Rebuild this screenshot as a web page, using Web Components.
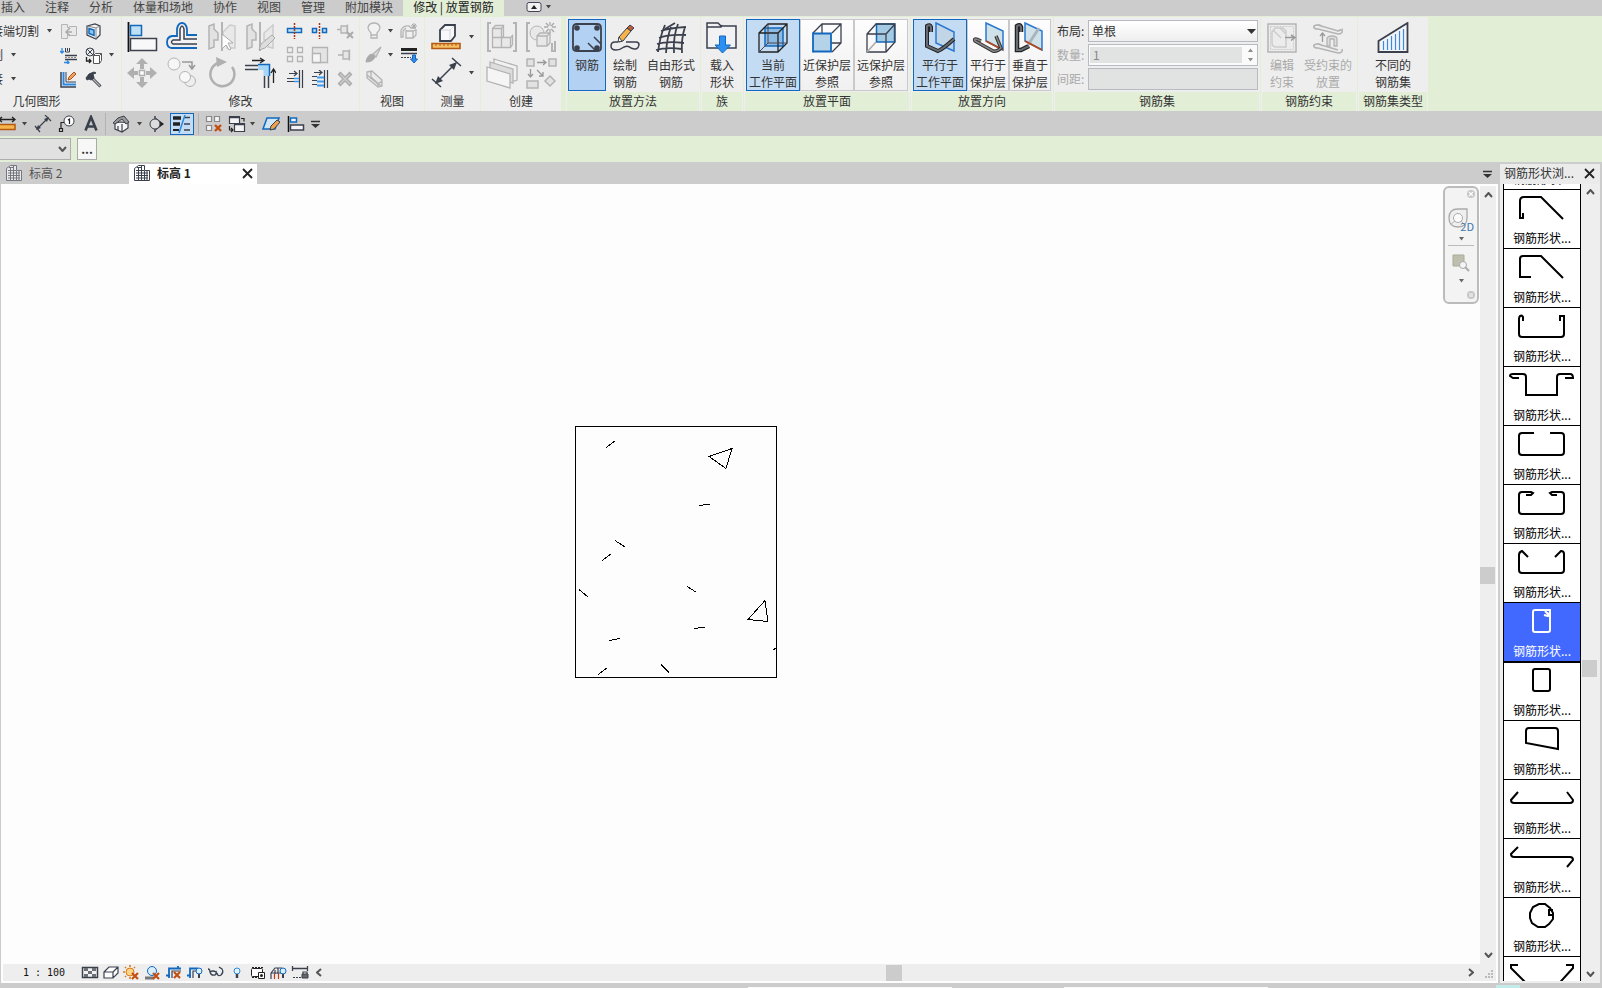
<!DOCTYPE html>
<html lang="zh-CN">
<head>
<meta charset="utf-8">
<title>修改 | 放置钢筋</title>
<style>
html,body{margin:0;height:100%}
body{font:12px/16px "Noto Sans CJK SC","Liberation Sans",sans-serif;color:#333;background:#ccc;overflow:hidden}
</style>
</head>
<body>
<cad-app></cad-app>
<script>
const D = '#3b404d', G = '#b4b4b4', B = '#1268bd', L = '#bfe0f2';
const svg = (w, h, body) => `<svg width="${w}" height="${h}" viewBox="0 0 ${w} ${h}" fill="none" aria-hidden="true">${body}</svg>`;
const p = (d, s = D, f = 'none', w = 1.5) => `<path d="${d}" stroke="${s}" fill="${f}" stroke-width="${w}"/>`;

const ICONS = {
  // geometry panel
  cope: [17, 17, p('M1.500 1.500h6v3h2v-1h7v9h-7v-1h-2v4h-6z', G, '#e9e9e9', 1) + p('M10 5l-4 4 4 4M6 9h6', '#aaa')],
  wallopen: [17, 17, p('M2 3l8-2 5 2v9l-4 4-9-4z', D, '#f4f4f6', 1.200) + p('M11 5v11M11 5l4-2M11 5L2 3', '#888', 'none', 1) + p('M4 5.500l5 1.500v5.500l-5-2z', B, '#8cc7ee')],
  beam: [17, 17, p('M2 1v5M0 4l2 2 2-2M4 15.500h5M7 13.500l2 2-2 2', '#2a8ae0', 'none', 1.300) + p('M5.500 1v4h4V1M7.500 1v3', D, 'none', 1) + p('M5 8.500h12M5 12.500h12', D, 'none', 1.300) + `<path d="M5 10.500h12" stroke="#888" stroke-dasharray="2 1"/>`],
  paintopt: [17, 17, `<circle cx="5" cy="5" r="4" stroke="${D}"/>` + p('M2 2l6 6M8 2L2 8', D, 'none', 1) + p('M1.500 10v4h4M4 12l2 2-2 2', '#222', 'none', 1.300) + p('M8.500 8.500l2-2h6v7l-2 3h-6zM8.500 8.500h6v8M14.500 8.500l2-2', '#555', '#fff', 1)],
  demolish: [17, 17, p('M1 1v15h15', D) + p('M3.500 1v12.500H16', '#2a8ae0', 'none', 2) + p('M6 1v10h10', D, 'none', 1) + p('M8 9l1-3 5-5 2 2-5 5z', '#a8541c', '#f2a45e', 1)],
  hammer: [17, 17, p('M7 7l8.500 8.500', D, 'none', 3) + p('M8 8l7 7', '#bbb', 'none', 1.200) + p('M1 7l3-4 5-2 2 1-3 1 1 4-3 2-2-1-2 1z', D, D, 1)],
  // modify panel, large
  align: [32, 32, p('M2.500 1v30', '#111', 'none', 1.800) + p('M4.500 4.500h11v10h-11z', B, L) + p('M4.500 17.500h26v12h-26z', D, '#f8f8fa')],
  offset: [32, 32, p('M31 27H5q-4-1-4-6t5-6h5V8q1-6 5-6t5 6v6h10', B, 'none', 1.800) + p('M31 23H7q-3-2 0-4h7V8q1-3 2-3t2 3v10h13', D, '#f4f4f4')],
  mirrorpick: [32, 32, p('M3 5l5-2v5l4 4v7H8v7l-5 2z', G, '#e2e2e2') + p('M29 5l-5-1-7 7v7h4v9h8z', '#ccc', '#e9e9e9') + p('M16 1v29', G, 'none', 2) + p('M16 13v15l4-4 3 5 2-1-3-6h5z', '#aaa', '#fff', 1)],
  mirrordraw: [32, 32, p('M3 5l5-2v5l4 4v7H8v7l-5 2z', G, '#e2e2e2') + p('M29 4l-9 8v7h4v7l5 1z', '#ccc', '#e9e9e9') + p('M16 1v29', G, 'none', 2) + p('M15 29l2-6 11-9 3 3-10 10z', '#aaa', '#ddd', 1)],
  move: [32, 32, p('M16 1l6 6h-4v5h-4V7h-4zM16 31l6-6h-4v-5h-4v5h-4zM1 16l7-6v4h4v4H8v4zM31 16l-7-6v4h-4v4h4v4z', 'none', '#b0b0b0') + p('M13.500 13.500h5v5h-5z', '#b0b0b0', '#fff')],
  copy: [32, 32, `<circle cx="8" cy="7" r="6" stroke="${G}" fill="#f6f6f6"/><circle cx="24" cy="24" r="5.500" stroke="${G}" fill="#eee"/><circle cx="19" cy="20" r="5.500" stroke="${G}" fill="#f8f8f8"/>` + p('M16 5h10v6M23 8l3 4 3-4', '#999')],
  rotate: [32, 32, p('M12 6A12 12 0 1 0 26 10', '#b0b0b0', 'none', 2.500) + p('M10 0l11 5-10 5z', 'none', '#b0b0b0')],
  trim: [32, 32, p('M1 8.500h13M1 12.500h13M20.500 19v12M24.500 19v12', D) + p('M14 7.500h11.500V19h-6v-6H14z', 'none', '#a5d6f5') + p('M14 7.500h11.500V19', B, 'none', 1.500) + p('M8 3.500h11M16 1l4 2.500L16 6M29.500 26V13M27 16l2.500-4 2.500 4', '#222', 'none', 1.300)],
  // modify panel, small
  split: [18, 18, p('M1.500 6.500h14v4h-14z', B, L) + `<path d="M8.500 1v16" stroke="#a63116" stroke-width="1.500" stroke-dasharray="2 1"/>`],
  splitgap: [18, 18, p('M1.500 6.500h4v4h-4zM11.500 6.500h4v4h-4z', B, L) + `<path d="M8.500 1v16" stroke="#a63116" stroke-width="1.500" stroke-dasharray="2 1"/>`],
  unpin: [18, 18, p('M1 7.500h4M5 4v7h6V4zM11.500 2.500v10', G, '#e6e6e6', 1.300) + p('M11 10l6 6M17 10l-6 6', '#aaa', 'none', 2)],
  array: [18, 18, p('M1.500 1.500h5v5h-5zM11.500 1.500h5v5h-5zM1.500 10.500h5v5h-5zM11.500 10.500h5v5h-5z', G, '#f2f2f2', 1.300)],
  scale: [18, 18, p('M1.500 1.500h15v15h-15z', G, '#e4e4e4', 1.300) + p('M1.500 7.500h8v9h-8z', G, '#f5f5f5', 1.300)],
  pin: [18, 18, p('M2 9h5M7 5v8h6V5zM13.500 3.500v11', G, '#e6e6e6', 1.300)],
  trimone: [18, 18, p('M1 8.500h7M1 11.500h7M3 3.500h8M8 1l3 2.500L8 6M13.500 0v18M16.500 0v18', D, 'none', 1.200) + p('M8 8.500h5M8 11.500h5', '#3a9af0', 'none', 1.500)],
  trimmany: [18, 18, p('M1 6.500h5M1 10.500h5M1 14.500h5M3 2.500h8M8 0l3 2.500L8 5M13.500 0v18M16.500 0v18', D, 'none', 1.200) + p('M6 7.500h7M6 11.500h7M6 15.500h7', '#3a9af0', 'none', 1.800)],
  del: [18, 18, p('M3 3l12 12M15 3L3 15', '#aaa', 'none', 4) + p('M4 4l10 10M14 4L4 14', '#ccc', 'none', 1.500)],
  // view panel
  bulb: [18, 18, p('M6 11q-3-3-3-5.500Q4 1 9 1t6 4.500Q15 8 12 11v5H6zM6 13h6', G, '#f2f2f2', 1.300)],
  hide: [18, 18, p('M1 8q3-5 8-4l2 2h5M6 8v8h7l3-3V8l-3 1H6M13 9v7M1 8v7h2V9l3-3', G, '#f0f0f0', 1.300) + p('M14 1v6M11 4h6M12 2l4 4M16 2l-4 4', '#aaa', 'none', 1)],
  brush: [18, 18, p('M16 1L8 8l3 3z', G, '#ddd', 1.300) + p('M1 16q1-7 6-8l3 3q-2 5-9 5z', '#aaa', '#aaa', 1)],
  lines: [18, 18, p('M1 3.500h16', '#222', 'none', 3) + p('M1 7.500h16', D) + `<path d="M1 11.500h10" stroke="${D}" stroke-dasharray="2 1"/>` + p('M12.500 9h3v4h2L14 17l-3.500-4h2z', B, '#3a8be8', 1)],
  section: [18, 18, p('M2 2l5-1 10 9v6l-4 1-11-9zM2 2v6M2 5l11 9v3M13 14l4-3M6 2v5l10 9', G, '#e8e8e8', 1.300)],
  // measure and create panels
  measure: [32, 32, p('M10 9l5-5h10v11l-4 5H10z', D, '#f8f8fb', 1.800) + p('M11 9h9v10M20 9l4-4', '#d5d5dc', 'none', 1) + p('M2 22.500h28v5H2z', '#b55a12', '#f6c064', 1.600) + p('M6 23v2M10 23v2M14 23v2M18 23v2M22 23v2M26 23v2', '#b55a12', 'none', 1)],
  dimension: [32, 32, p('M6 26L26 6M2 22l9 8M22 1l9 8', D, 'none', 1.500) + p('M5 27l3-8 5 5zM27 5l-3 8-5-5z', 'none', D)],
  group: [32, 32, p('M5 2H2v28h3M27 2h3v28h-3', G, 'none', 2) + p('M6.500 7.500l3-3h8v11l-2 1h-9zM6.500 16.500h9v10h-9zM15.500 16.500h9v10h-9zM24.500 16.500l2-2v9l-2 3M6.500 7.500h9v9M15.500 7.500l2-3', G, '#e8e8e8', 1.300)],
  similar: [32, 32, p('M5 2H2v28h3M27 22v8h3V20', G, 'none', 2) + `<circle cx="12" cy="12" r="7" stroke="${G}" fill="#e8e8e8"/>` + p('M12 15l3-3h10v10l-3 3H12zM12 15h10v10M22 15l3-3', G, '#e8e8e8', 1.300) + p('M25 1v11M19 6h12M21 2l8 9M29 2l-8 9', '#aaa', 'none', 1.300) + '<circle cx="25" cy="6.500" r="2" fill="#eee"/>'],
  assembly: [32, 32, p('M8 2l23 7v14l-3 1L8 17z', G, '#f2f2f2', 1.300) + p('M4 5l23 7v14L4 19z', G, '#ddd', 1.300) + p('M1 10l23 7v14L1 24z', G, '#f5f5f5', 1.300)],
  parts: [32, 32, p('M2 2h7v7H2zM24 2h7v7h-7zM2 24h11v7H2z', G, '#e2e2e2') + p('M25 19l5 5-5 5-5-5z', G, '#e2e2e2') + p('M12 5.500h8M18 3l3 2.500L18 8M5.500 12v7M3 17l2.500 3L8 17M12 13l6 6M18 15v4h-4', '#999', 'none', 1.300)],
  // rebar placement
  rebar: [32, 32, p('M6 2h20q4 0 4 4v20q0 3-4 3H6q-4 0-4-3V6q0-4 4-4z', D, 'none', 1.800) + `<g fill="${D}"><circle cx="6" cy="6" r="2.800"/><circle cx="26" cy="6" r="2.800"/><circle cx="6" cy="26" r="2.800"/><circle cx="26" cy="26" r="2.800"/></g>` + p('M17 21l7 7M23 15l7 7', D, 'none', 1.500)],
  sketch: [32, 32, p('M9 20H6q-4 0-4 4t5 4q4 0 8-3 4-2 7 1 7 3 8-3 0-3-3-3H17', D) + p('M10 15l8-9 4 3-8 10-4 1z', D, '#f6b34a', 1) + p('M18 6l3-3 4 3-3 3z', D, '#c55a38', 1) + p('M9 20l1-5 3 4z', D, '#fff', 1)],
  freeform: [32, 32, p('M6 9q8-3 25-4M4 16q9-4 27-3M2 22q10-3 27-1M1 28q10-3 26-1M10 3Q5 14 3 30M16 5q-4 10-5 26M23 2q-5 12-4 29M30 5q-4 12-3 26M10 7L20 1', D, 'none', 1.800)],
  load: [32, 32, p('M1 4V1h11l3 3h15v22H1zM1 5h14l1-2', D, '#f2f2f5') + p('M13.500 14h6v9h5L16.500 31 9 23h4.500z', B, '#2e90f2', 1)],
  curplane: [32, 32, p('M8 6h18v18H8z', B, '#8fbbe2', 1.500) + p('M2 11l9-9h19v19l-9 9H2zM2 11h19v19M21 11l9-9', '#222', 'none', 1.300) + p('M2 30l9-9h19M11 21V2', '#445', 'none', 1)],
  nearplane: [32, 32, p('M2 11l9-9h19v19l-9 9M11 2v19M11 21h19M21 11l9-9M2 30l9-9', D, 'none', 1.300) + p('M2 11.500h18v18H2z', B, '#b5d3e8', 1.800)],
  farplane: [32, 32, p('M11.500 2h18v18h-18z', B, '#a4cbe3', 1.500) + p('M2 12l9-10h19v18l-9 10H2zM2 12h19v18M21 12l9-10', D, 'none', 1.300) + p('M2 30l9-10', '#aaa')],
  parplane: [32, 32, p('M12 1l18 9v19l-18-8z', '#2a78d0', '#c1d5e6', 1.500) + p('M7 10V5q-1-3-4-1v20l11 5q5-2 16-12', '#222', 'none', 4) + p('M7 10V5q-1-3-4-1v20l11 5q5-2 16-12', '#666b74', 'none', 2)],
  parcover: [32, 32, p('M14 1l17 8v19l-17-9z', '#2a78d0', '#cfe2e8', 1.500) + p('M14 19l17 9', '#b5471c', 'none', 1.800) + p('M9 19q-8-4-6 0l18 10q4 1 8-3l-5-12', '#333', 'none', 3.500) + p('M9 19q-8-4-6 0l18 10q4 1 8-3l-5-12', '#888', 'none', 1.500)],
  perpcover: [32, 32, p('M11 1l17 8v19l-17-9z', '#2a78d0', '#cfe2e8', 1.500) + p('M7 10V5q-1-3-4-1v24h4l8-4', '#222', 'none', 4.500) + p('M7 10V5q-1-3-4-1v24h4l8-4', '#666b74', 'none', 2) + p('M14 23L25 6', '#aab4be', 'none', 3) + p('M11 19l17 9', '#b5471c', 'none', 1.800)],
  editcons: [32, 32, p('M2 2h28v28H2z', G, '#ececec') + `<path d="M4.500 4.500h23v23h-23z" stroke="#ccc" stroke-dasharray="2 1"/>` + p('M9 6h8l3 3v16h-9q-5 0-5-4V10zM7 8l8 8M14 6l6 6', '#ccc') + p('M19 15.500h9M25 13l4 2.500-4 3', '#999')],
  placecons: [32, 32, p('M10 5q-2-4-8-1-1 3 4 3l20 5q5 0 4-4M6 3l20 6q5-2 4-2M10 24q-2-4-8-1-1 3 4 3l20 5q5 0 4-4M6 22l20 6', G, 'none', 1.600) + p('M10.500 20v-8M8 14l2.500-3 2.500 3', '#999', 'none', 1.300) + p('M15 24v-7q0-3 5-3t5 3v7h-3v-7h-4v7z', G, '#ddd', 1.300)],
  varset: [32, 32, p('M1.500 19v11h29V1z', D, '#f4f4f7', 1.800) + p('M6.500 19v9M10.500 17v11M14.500 14v14M18.500 12v16M22.500 9v19M26.500 7v21', '#3a8be0', 'none', 1.200)],
  // quick access bar
  ruler: [18, 18, p('M0 4.500h16M3 2L0 4.500 3 7M13 2l3 2.500L13 7', '#222', 'none', 1.300) + p('M-2 9.500h18v5H-2z', '#b55a12', '#f6b64c')],
  qdim: [18, 18, p('M3 14L14 3M1 11l5 6M11 0l6 6', D, 'none', 1.200) + p('M2 15l2-5 3 3zM15 2l-2 5-3-3z', 'none', D)],
  tag: [18, 18, `<circle cx="11" cy="6" r="5" stroke="${D}" fill="#fff"/>` + p('M10 5l1.500-1v5M6 7.500H3v6M1.500 13.500h3v3h-3z', '#222', 'none', 1.200)],
  lettera: [18, 18, p('M3.500 15.500L9 2l5.500 13.500M5 11.500h8', D, 'none', 2.600)],
  house: [18, 18, p('M3 8l6-1 7 1v5l-6 4-7-3z', D, '#f4f4f4', 1.200) + p('M1 8l5-5 6-2 5 6-3 2-4-5-7 5z', D, '#999', 1) + p('M10 9v8M6 11v4', D, 'none', 1.200)],
  sect: [18, 18, p('M9 3l8 6-8 6z', 'none', '#222') + `<circle cx="8" cy="9" r="5" stroke="${D}" fill="#ddd"/>` + p('M8 1v3M8 14v3', D)],
  thin: [18, 18, p('M0 3h8M0 9h7', '#222', 'none', 3.500) + p('M0 15h6', '#222', 'none', 2) + p('M11 2.500h6M11 9h6M11 15h6', D, 'none', 1.300) + p('M12 0L6 18', '#2a8ae0')],
  closewin: [18, 18, p('M1.500 1.500h5v5h-5zM9.500 1.500h5v5h-5zM1.500 10.500h5v5h-5z', '#888', '#f4f4f4', 1.200) + p('M10 10l6 6M16 10l-6 6', '#c24f12', 'none', 2.400)],
  switchwin: [18, 18, p('M1.500 1.500h10v7h-10zM6.500 8.500h10v8h-10z', D, '#f4f4f4', 1.200) + p('M1 2.500h11M6 9.500h11', D, 'none', 1.500) + p('M13 3.500h3v3M1.500 11v4h3M3 13l2 2-2 2', '#222', 'none', 1.200)],
  plane: [18, 18, p('M5 3h12l-4 11H1z', B, '#cfe6f5') + p('M8 15l1-4 6-6 3 2-6 7z', D, '#efa14c', 1)],
  qalign: [18, 18, p('M1.500 1v16', '#111', 'none', 1.500) + p('M3.500 3h6v4h-6z', B, '#eef6fc') + p('M3.500 10h13v5h-13z', D, '#f4f4f8')],
  cust: [10, 8, p('M0 1.500h9', '#333', 'none', 1.500) + p('M0 4h9L4.500 8z', 'none', '#333')],
  sheet: [18, 18, p('M1.500 4.500l4-3h6v5h5v10h-15z', D, '#fff', 1) + p('M4 3.500h5M3 6.500h8M3 9h12M3 11.500h12M3 14h12M5.500 3v13M8.500 2v14M11.500 7v9M14 7v9', D, 'none', 1)],
  caret: [5, 4, p('M0 0h5L2.500 3.500z', 'none', '#444')],
  caretbig: [9, 5, p('M0 0h9L4.500 5z', 'none', '#333')],
  close: [11, 11, p('M1 1l9 9M10 1l-9 9', '#222', 'none', 1.800)],
  ribmin: [16, 10, p('M3 .500h10q2 0 2 2v5q0 2-2 2H3q-2 0-2-2v-5q0-2 2-2z', '#445', '#f2f2f2', 1) + p('M5 7l3-4 3 4z', 'none', '#222')],
  up: [9, 6, p('M1 5l3.500-4L8 5', '#555', 'none', 2)],
  down: [9, 6, p('M1 1l3.500 4L8 1', '#555', 'none', 2)],
  left: [6, 9, p('M5 1L1 4.500 5 8', '#555', 'none', 2)],
  right: [6, 9, p('M1 1l4 3.500L1 8', '#555', 'none', 2)],
  grip: [9, 9, '<path fill="#bbb" d="M6 0h2v2H6zM3 3h2v2H3zM6 3h2v2H6zM0 6h2v2H0zM3 6h2v2H3zM6 6h2v2H6z"/>'],
  // view control bar
  detail: [18, 16, p('M1.500 2.500h15v10h-15z', D, '#f2f2f2') + '<path fill="#69707a" d="M3 3h4v3H3zM11 3h4v3h-4zM7 6h4v3H7zM3 9h4v3H3zM11 9h4v3h-4z"/>'],
  visual: [18, 16, p('M2 7l5-5h9v6l-5 5H2zM2 7h9v6M11 7l5-5', D, '#fff', 1.200)],
  sun: [18, 16, `<circle cx="7" cy="7" r="4" stroke="#d97a16" fill="#fcd58a"/>` + p('M7 0v2M7 12v2M0 7h2M2 2l1 1M2 12l1-1M12 2l-1 1', '#d97a16') + p('M9 8l6 6M15 8l-6 6', '#c24f12', 'none', 2.200)],
  shadow: [18, 16, p('M1 13h9', '#777', 'none', 3) + `<circle cx="8" cy="6" r="4.500" stroke="${B}" fill="#d8eefa"/>` + p('M9 8l6 6M15 8l-6 6', '#c24f12', 'none', 2.200)],
  cropoff: [18, 16, p('M1 10.500h4M4 13V3.500h12M13 1v3', B, 'none', 1.800) + p('M7 13V6h9', D, 'none', 1.200) + p('M9 7l6 6M15 7l-6 6', '#c24f12', 'none', 2.200)],
  cropshow: [18, 16, p('M1 10.500h4M4 13V3.500h8', B, 'none', 1.800) + p('M7 13V6h4', D, 'none', 1.200) + `<circle cx="13" cy="6" r="3" stroke="${B}" fill="#d8eefa"/>` + p('M13 9v4', D, 'none', 2)],
  glasses: [18, 16, p('M1 4q2 0 2 3 1 4 5 3 2-1 1-4M10 8q1 4 4 2 3-3 1-6l-3-2M3 7q3-2 6 0', D, '#e8f0f4', 1.300)],
  reveal: [18, 16, `<circle cx="9" cy="6" r="3" stroke="#2a8ae0" fill="#e4f3fc"/>` + p('M9 9v4', D, 'none', 2.500)],
  temp: [18, 16, `<rect x="2.500" y="3.500" width="11" height="8" rx="1" stroke="#222" fill="#fff"/><path d="M3 2.500h11M3 12.500h6" stroke="#222" stroke-dasharray="2 1"/>` + p('M9.500 7.500h6v6h-6z', '#222', '#fff', 1) + '<circle cx="12.500" cy="10.500" r="1.500" fill="#222"/>'],
  analyt: [18, 16, p('M1 8l4-5h7M1 8v6M5 5v4M8 3v6M1 8h10', D, 'none', 1.200) + p('M4.500 9v5M8.500 9v5', '#c23b16', 'none', 1.200) + `<circle cx="13" cy="6" r="3" stroke="${B}" fill="#d8eefa"/>` + p('M13 9v4', D, 'none', 2)],
  constr: [18, 16, p('M1 3.500h16M1.500 1v5M16.500 1v5', D, 'none', 1.300) + `<path d="M2 12.500h8" stroke="${D}" stroke-dasharray="2 1"/>` + p('M11 9h6v4h-6z', D, '#666', 1) + p('M12 9V7h4v2', D, 'none', 1.200)],
  // navigation bar
  navx: [8, 8, '<circle cx="4" cy="4" r="4" fill="#bbb"/>' + p('M2 2l4 4M6 2L2 6', '#fff', 'none', 1.200)],
  navmin: [8, 8, '<circle cx="4" cy="4" r="4" fill="#bbb"/>' + p('M2 3h4M2 5h4', '#fff', 'none', 1)],
  wheel: [26, 22, p('M10 1h9v9q0 9-9 9T1 10t9-9z', '#999', '#efefef', 1.300) + `<circle cx="10" cy="10" r="4.500" stroke="#999" fill="#fff"/>` + p('M3 16l4-3M13 13l3 3', '#aaa', 'none', 1)],
  zoomr: [18, 18, p('M1 1h11v11H1z', '#999980', '#b3b3a0', 1) + `<circle cx="11" cy="11" r="3.500" stroke="#999" fill="#f6f6f6"/>` + p('M13 13l4 4', '#999', 'none', 2)]
};

const SHAPES = [
  'M18 23v5h-3V11q0-4 4-4h17L58 29',
  'M26 28H15V10q0-3 3-3h18L58 29',
  'M18 13V9q-1-2-3-1-1 1-1 3v15q0 3 3 3h39q3 0 3-3V8h-4v5',
  'M14 11H8L5 9q0-2 3-2h10q3 0 3 3v18h31V10q0-3 3-3h10q3 0 3 4h-8',
  'M29 7H17q-3 0-3 3v16q0 3 3 3h39q3 0 3-3V10q0-3-3-3H45',
  'M21 10h5l2-2-2-1h-9q-3 0-3 3v16q0 3 3 3h39q3 0 3-3V10q0-3-3-3h-9l-2 1 2 2h5',
  'M23 13l-6-6q-3 1-3 4v15q0 3 3 3h39q3 0 3-3V10q0-3-3-3l-6 6',
  'M30 7h15v20q0 2-2 2H30q-2 0-2-2V9q0-2 2-2M40 8l3 3M39 12l4 1 2-4',
  'M30 7h13q2 0 2 2v18q0 2-2 2H30q-2 0-2-2V9q0-2 2-2z',
  'M24 7h26q3 0 3 3v18L21 22V10q0-3 3-3z',
  'M13 12L6 20q0 3 3 3h56q3 0 3-3l-6-8',
  'M13 8l-7 7q0 3 3 3h56q3 0 3 3l-6 7',
  'M34 6h6l5 4 3 5v6l-4 5-4 3h-7l-6-4-2-5v-5l3-6zM48 12h-4v5h4',
  'M13 8H6v3l22 22h20L68 11V8h-7'
];

// Registers an element whose shadow root is cloned from a template.
function define(tag, css, html) {
  customElements.define(tag, class extends HTMLElement {
    connectedCallback() {
      if (this.shadowRoot) return;
      const t = document.createElement('template');
      const body = typeof html === 'function' ? html(this) : html;
      t.innerHTML = `<style>*{box-sizing:border-box}button,input,select{font:inherit;color:inherit;margin:0}${css}</style>${body}`;
      this.attachShadow({ mode: 'open' }).append(t.content.cloneNode(true));
    }
  });
}

define('ui-icon', ':host{display:inline-flex;flex:none}svg{display:block;overflow:hidden}',
  el => svg(...ICONS[el.getAttribute('name')]));

define('icon-button', `:host{display:flex;align-items:center;justify-content:center}
button{border:0;background:none;padding:0;display:flex}
:host([pressed]) button{width:24px;height:22px;border:1px solid #1268bd;background:#c4dcf3;align-items:center;justify-content:center}`,
  el => `<button aria-label="${el.getAttribute('label') || el.getAttribute('name')}"><ui-icon name="${el.getAttribute('name')}"></ui-icon></button>`);

define('tool-button', `:host{display:block;height:72px;flex:none}
button{width:100%;height:100%;padding:2px 0 0;border:1px solid transparent;background:none;display:flex;flex-direction:column;align-items:center;line-height:17px;white-space:nowrap}
ui-icon{margin-bottom:2px}
:host([framed]) button{border-color:#c9c9cc;background:linear-gradient(#fdfdfd,#f0f0f0)}
:host([pressed]) button{border-color:#1268bd;background:#c4dcf3}
:host([pressed][icon="rebar"]) button{background:#b3d2f3}
button:disabled{color:#aaa}`,
  el => `<button ${el.hasAttribute('off') ? 'disabled' : ''} aria-pressed="${el.hasAttribute('pressed')}"><ui-icon name="${el.getAttribute('icon')}"></ui-icon><slot></slot></button>`);

define('ribbon-panel', `:host{display:flex;flex-direction:column;flex:none;background:#eee;height:94px;overflow:hidden}
.body{height:75px;padding-top:2px;display:flex;justify-content:center}
h2{margin:0;padding-right:var(--cut,0);font-size:12px;font-weight:400;height:19px;line-height:18px;text-align:center;white-space:nowrap}
:host([context]) h2{background:#e2eed6;margin:0 1px}`,
  el => `<div class="body"><slot></slot></div><h2>${el.getAttribute('heading')}</h2>`);

define('menu-tabs', `:host{display:block;height:16px;background:#ccc;color:#444}
nav{display:flex;height:16px;line-height:14px;white-space:nowrap}
a{color:inherit;text-decoration:none;padding:0 10px}
a:first-child{padding-left:1px}
a.on{background:#e2eed6;color:#222}
.end{display:flex;gap:4px;align-items:center;padding:0 0 3px 22px}`,
  `<nav>${['插入', '注释', '分析', '体量和场地', '协作', '视图', '管理', '附加模块'].map(t => `<a href="#">${t}</a>`).join('')}<a class="on" href="#" aria-current="page">修改 | 放置钢筋</a><span class="end"><ui-icon name="ribmin"></ui-icon><ui-icon name="caret"></ui-icon></span></nav>`);

const cells = names => names.split(' ').map(n => n === '-' ? '<span></span>' : `<icon-button name="${n}"></icon-button>`).join('');

define('rebar-layout', `:host{display:block;width:100%;padding:1px 2px 0 3px}
form{display:grid;grid-template-columns:29px 1fr;grid-auto-rows:22px;gap:2px;align-items:center;line-height:16px}
label{white-space:nowrap}label.off{color:#aaa}
.f{position:relative;height:22px;border:1px solid #b8bac2;background:#fafafa;display:flex;align-items:center}
select{appearance:none;border:0;background:linear-gradient(#fff,#eee);width:100%;height:20px;padding:0 3px}
.f>ui-icon{position:absolute;right:1px;pointer-events:none}
input{border:0;height:16px;width:100%;padding:0 3px;background:#e1e3e2;color:#888}
.n{padding:1px}.n input{margin-right:3px}
.s{display:flex;flex-direction:column;gap:6px;padding:0 3px;opacity:.6}.s ui-icon:first-child{transform:rotate(180deg)}
.g{background:#e1e3e2}`,
  `<form><label for="a">布局:</label><div class="f"><select id="a"><option>单根</option></select><ui-icon name="caretbig"></ui-icon></div>
<label class="off" for="b">数量:</label><div class="f n"><input id="b" value="1" disabled><span class="s"><ui-icon name="caret"></ui-icon><ui-icon name="caret"></ui-icon></span></div>
<label class="off" for="c">间距:</label><div class="f g"><input id="c" disabled></div></form>`);

define('tool-ribbon', `:host{display:flex;gap:1px;background:#e2eed6;padding-top:1px;height:95px;overflow:hidden}
.g{display:grid;width:100%;justify-content:start}
.small{grid-auto-rows:24px}.big{grid-auto-rows:36px}
.geo{display:grid;grid-template-rows:24px 24px 24px;flex:none;width:56px}
.geo button{border:0;background:none;padding:0;display:flex;align-items:center;justify-content:flex-end;gap:8px;overflow:hidden;white-space:nowrap}
.geo button.s{padding-right:40px}
.geo button.l{padding-right:4px}`,
  `<ribbon-panel heading="几何图形" style="width:121px;--cut:48px">
  <div class="geo"><button class="l">接端切割<ui-icon name="caret"></ui-icon></button><button class="s">割<ui-icon name="caret"></ui-icon></button><button class="s">接<ui-icon name="caret"></ui-icon></button></div>
  <div class="g small" style="grid-template-columns:25px 25px 10px">${cells('cope wallopen - beam paintopt caret demolish hammer -')}</div></ribbon-panel>
<ribbon-panel heading="修改" style="width:237px"><div class="g big" style="grid-template-columns:40px 40px 39px 38px;width:160px">${cells('align offset mirrorpick mirrordraw move copy rotate trim')}</div>
  <div class="g small" style="grid-template-columns:repeat(3,25px);width:77px">${cells('split splitgap unpin array scale pin trimone trimmany del')}</div></ribbon-panel>
<ribbon-panel heading="视图" style="width:64px"><div class="g small" style="grid-template-columns:28px 5px 32px">${cells('bulb caret hide brush caret lines section - -')}</div></ribbon-panel>
<ribbon-panel heading="测量" style="width:55px"><div class="g big" style="grid-template-columns:42px 8px">${cells('measure caret dimension caret')}</div></ribbon-panel>
<ribbon-panel heading="创建" style="width:80px"><div class="g big" style="grid-template-columns:42px 36px">${cells('group similar assembly parts')}</div></ribbon-panel>
<span style="width:3px"></span>
<ribbon-panel context heading="放置方法" style="width:134px"><tool-button icon="rebar" pressed style="width:38px">钢筋</tool-button><tool-button icon="sketch" style="width:38px">绘制<br>钢筋</tool-button><tool-button icon="freeform" style="width:54px">自由形式<br>钢筋</tool-button></ribbon-panel>
<ribbon-panel context heading="族" style="width:42px"><tool-button icon="load" style="width:40px">载入<br>形状</tool-button></ribbon-panel>
<ribbon-panel context heading="放置平面" style="width:166px"><tool-button icon="curplane" pressed style="width:54px">当前<br>工作平面</tool-button><tool-button icon="nearplane" framed style="width:54px">近保护层<br>参照</tool-button><tool-button icon="farplane" framed style="width:54px">远保护层<br>参照</tool-button></ribbon-panel>
<ribbon-panel context heading="放置方向" style="width:142px"><tool-button icon="parplane" pressed style="width:54px">平行于<br>工作平面</tool-button><tool-button icon="parcover" framed style="width:42px">平行于<br>保护层</tool-button><tool-button icon="perpcover" framed style="width:42px">垂直于<br>保护层</tool-button></ribbon-panel>
<ribbon-panel context heading="钢筋集" style="width:206px"><rebar-layout></rebar-layout></ribbon-panel>
<ribbon-panel context heading="钢筋约束" style="width:96px"><tool-button off icon="editcons" style="width:42px">编辑<br>约束</tool-button><tool-button off icon="placecons" style="width:50px;margin-right:4px">受约束的<br>放置</tool-button></ribbon-panel>
<ribbon-panel context heading="钢筋集类型" style="width:70px"><tool-button icon="varset" style="width:42px">不同的<br>钢筋集</tool-button></ribbon-panel>`);

define('quick-bar', `:host{display:flex;align-items:center;height:25px;background:#ccc}
icon-button{width:24px}icon-button.c{width:10px}i{width:1px;height:22px;background:#b2b2b2;margin:0 2px}`,
  `<icon-button name="ruler" style="width:16px"></icon-button><span style="width:3px"></span><icon-button class="c" name="caret"></icon-button><span style="width:2px"></span>
<icon-button name="qdim"></icon-button><icon-button name="tag"></icon-button><icon-button name="lettera" label="文字"></icon-button><i></i>
<icon-button name="house" style="width:26px"></icon-button><icon-button class="c" name="caret"></icon-button><icon-button name="sect"></icon-button><icon-button name="thin" pressed style="width:28px"></icon-button><i></i>
<icon-button name="closewin" style="width:26px"></icon-button><icon-button name="switchwin" style="width:20px"></icon-button><icon-button class="c" name="caret"></icon-button><icon-button name="plane" style="width:28px"></icon-button><icon-button name="qalign" style="width:22px"></icon-button><icon-button name="cust" style="width:18px"></icon-button>`);

define('options-bar', `:host{display:flex;gap:6px;height:26px;background:#e2eed6;padding-top:2px}
.sel{position:relative;width:71px;height:22px;display:flex;align-items:center}
select{appearance:none;width:100%;height:22px;border:1px solid #adadad;border-left:0;border-radius:0;background:#e1e1e1}
ui-icon{position:absolute;right:4px;pointer-events:none}
button{width:20px;height:22px;border:1px solid #aaa;background:#f7f7f7;padding:0;line-height:18px;font-weight:700}`,
  `<div class="sel"><select aria-label="钢筋形状"><option></option></select><ui-icon name="down"></ui-icon></div><button>...</button>`);

define('view-tabs', `:host{display:flex;height:22px;background:#ccc;padding-top:2px;line-height:20px;align-items:stretch}
a{display:flex;align-items:center;gap:6px;color:#555;text-decoration:none;padding:0 5px 2px;width:129px}
a.on{background:#fff;color:#222;font-weight:700;width:128px;padding:0 4px 2px}
a ui-icon:last-child{margin-left:auto}a.off ui-icon{opacity:.6;margin:0}
span{margin-left:auto;padding-right:5px;display:flex;align-items:center}`,
  `<a class="off" href="#"><ui-icon name="sheet"></ui-icon>标高 2</a><a class="on" href="#"><ui-icon name="sheet"></ui-icon>标高 1<ui-icon name="close"></ui-icon></a><span><ui-icon name="cust"></ui-icon></span>`);

define('v-scroll', `:host{display:flex;flex-direction:column;align-items:center;background:#eee;width:16px;padding:6px 0}
i{width:15px;height:17px;background:#ccc;align-self:flex-start}span{flex:var(--before)}b{flex:var(--after)}`,
  `<ui-icon name="up"></ui-icon><span></span><i></i><b></b><ui-icon name="down"></ui-icon>`);

define('nav-bar', `:host{display:flex;flex-direction:column;align-items:center;width:36px;height:118px;border:2px solid #bbb;border-radius:6px;background:#f3f3f3;padding:2px 2px 3px;box-sizing:border-box}
.e{align-self:flex-end}hr{width:26px;border:0;border-top:1px solid #bbb;margin:4px 0 8px}
.w{position:relative;margin:10px 0 5px;height:24px}.w b{position:absolute;right:0;bottom:0;font-size:11px;line-height:12px;font-weight:400;color:#3f76ad}
.z{margin-bottom:7px}ui-icon{opacity:.8}.l{margin-top:auto}`,
  `<ui-icon class="e" name="navx"></ui-icon><span class="w"><ui-icon name="wheel"></ui-icon><b>2D</b></span><ui-icon name="caret"></ui-icon><hr><ui-icon class="z" name="zoomr"></ui-icon><ui-icon name="caret"></ui-icon><ui-icon class="e l" name="navmin"></ui-icon>`);

define('drawing-canvas', `:host{display:block;position:relative;background:#fdfdfd;flex:1;min-width:0}
svg{position:absolute;left:574px;top:242px}nav-bar{position:absolute;right:1px;top:2px}`,
  `<svg width="203" height="252" viewBox="0 0 203 252" fill="none" stroke="#000" shape-rendering="crispEdges" role="img" aria-label="柱截面"><path d="M.500.500h201v251H.500z"/><path d="M31 21.500l9-6.500M134 30.500l23-8-6 20zM124 79.500l11-1.500M40 114.500l10 6.500M27 134.500l9-6.500M4 163.500l9 7.500M112 160.500l9 5.500M190 174.500l3 21-20-2zM119 202.500l11-1.500M34 214.500l11-2M23 248.500l9-6.500M86 238.500l8 8M198 223.500l3-1"/></svg><nav-bar></nav-bar>`);

define('view-status', `:host{display:flex;align-items:center;height:17px;background:#eee;margin:0 2px 2px}
.t{width:76px;padding-left:20px;font:10px/16px "DejaVu Sans Mono",monospace;color:#111}
icon-button{width:21px}icon-button[name="left"]{width:17px}span.a{flex:552}i{width:16px;height:16px;background:#ccc}span.b{flex:559}
.r{width:15px;margin-right:2px}`,
  `<span class="t">1 : 100</span>${cells('detail visual sun shadow cropoff cropshow glasses reveal temp analyt constr left')}<span class="a"></span><i></i><span class="b"></span><ui-icon class="r" name="right"></ui-icon><ui-icon name="grip" style="margin:3px 2px 0 0"></ui-icon>`);

define('shape-item', `:host{display:block;height:59px;flex:none}
button{width:100%;height:59px;border:0;border-bottom:1px solid #000;background:#fff;color:#000;padding:0;display:flex;flex-direction:column;align-items:center;line-height:18px}
:host([selected]) button{background:#4169ff;color:#fff;outline:1px solid #000}
:host([selected]){position:relative}
svg{flex:none;display:block}`,
  el => `<button aria-pressed="${el.hasAttribute('selected')}">${svg(75, 39, `<path d="${SHAPES[el.getAttribute('shape')]}" stroke="currentColor" stroke-width="2"/>`)}<slot></slot></button>`);

define('shape-browser', `:host{display:flex;flex-direction:column;width:104px;flex:none;padding:2px 2px 0;background:#ccc;box-sizing:border-box}
header{height:20px;background:#ebebeb;display:flex;align-items:center;justify-content:space-between;padding:0 5px 2px 4px;line-height:18px;color:#333}
.b{flex:1;min-height:0;display:flex;background:#eee;padding-left:3px}
.list{width:78px;flex:none;border:solid #000;border-width:0 1px;display:flex;flex-direction:column;overflow:hidden;margin-bottom:2px}
.first{height:6px;flex:none;display:flex;align-items:flex-end;overflow:hidden}.first shape-item{width:76px}
v-scroll{margin-left:1px;--before:461;--after:291;padding:5px 0 6px}`,
  `<header>钢筋形状浏...<ui-icon name="close"></ui-icon></header><div class="b"><div class="list"><div class="first"><shape-item shape="0">钢筋形状...</shape-item></div>${SHAPES.map((_, i) => `<shape-item shape="${i}" ${i === 7 ? 'selected' : ''}>钢筋形状...</shape-item>`).join('')}</div><v-scroll></v-scroll></div>`);

define('cad-app', `:host{display:flex;flex-direction:column;height:100vh;background:#ccc}
main{flex:1;min-height:0;display:flex}
.view{flex:1;min-width:0;display:flex;flex-direction:column}
.sheet{flex:1;min-height:0;display:flex;flex-direction:column;background:#fdfdfd;border-left:1px solid #ccc}
.row{flex:1;min-height:0;display:flex}
v-scroll{margin:2px 2px 0 0;--before:366;--after:366}
footer{height:5px;display:flex;align-items:flex-end;padding-left:748px}
footer i{height:1px;width:204px;background:#fafafa;margin-right:112px}footer b{width:24px;height:3px;background:#c4eaea;margin-left:116px}`,
  `<menu-tabs></menu-tabs><tool-ribbon></tool-ribbon><quick-bar></quick-bar><options-bar></options-bar>
<main><div class="view"><view-tabs></view-tabs><div class="sheet"><div class="row"><drawing-canvas></drawing-canvas><v-scroll></v-scroll></div><view-status></view-status></div></div><shape-browser></shape-browser></main>
<footer><i></i><i></i><b></b></footer>`);
</script>
</body>
</html>
